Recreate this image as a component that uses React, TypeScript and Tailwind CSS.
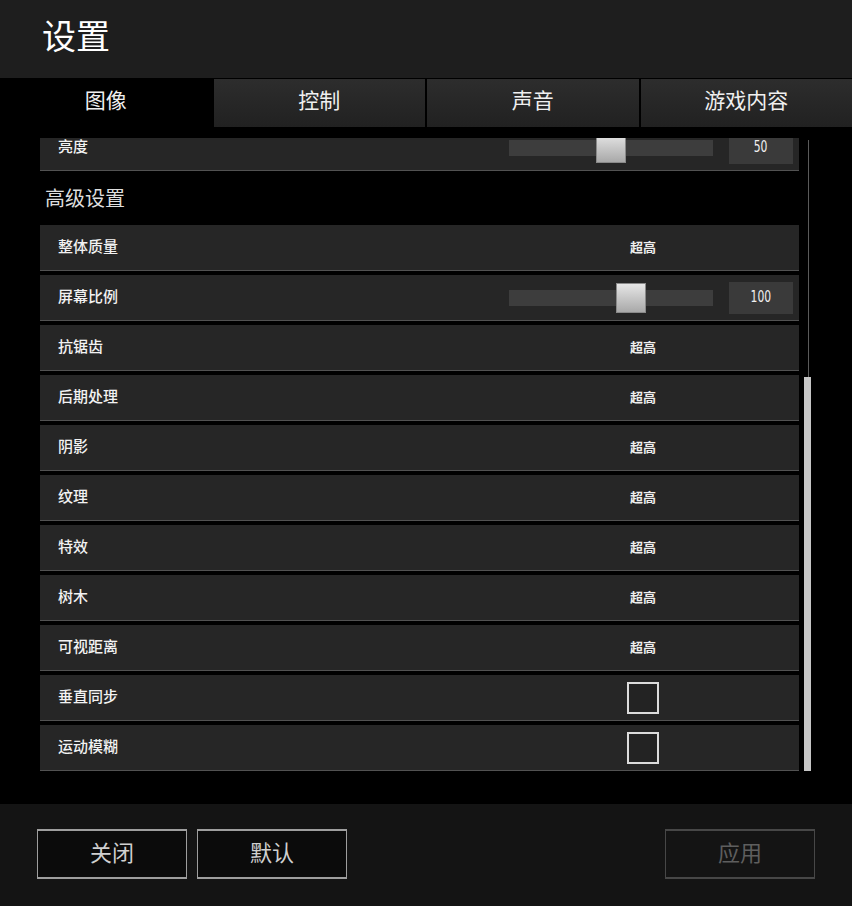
import React from "react";

const FONT = "font-['Noto_Sans_CJK_SC','Noto_Sans',sans-serif]";

type Row =
  | { label: string; kind: "text"; value: string }
  | { label: string; kind: "check" }
  | { label: string; kind: "slider"; value: number; thumb: string };

const rows: Row[] = [
  { label: "整体质量", kind: "text", value: "超高" },
  { label: "屏幕比例", kind: "slider", value: 100, thumb: "left-[107px]" },
  { label: "抗锯齿", kind: "text", value: "超高" },
  { label: "后期处理", kind: "text", value: "超高" },
  { label: "阴影", kind: "text", value: "超高" },
  { label: "纹理", kind: "text", value: "超高" },
  { label: "特效", kind: "text", value: "超高" },
  { label: "树木", kind: "text", value: "超高" },
  { label: "可视距离", kind: "text", value: "超高" },
  { label: "垂直同步", kind: "check" },
  { label: "运动模糊", kind: "check" },
];

const tabs = ["图像", "控制", "声音", "游戏内容"];

function Slider({ value, thumb }: { value: number; thumb: string }) {
  return (
    <div className="flex items-center gap-4">
      <div className="relative h-4 w-[204px] bg-[#3d3d3d]">
        <div
          className={`absolute top-1/2 h-[30px] w-[30px] -translate-y-1/2 border border-[#8a8a8a] bg-gradient-to-b from-[#e6e6e6] to-[#a9a9a9] ${thumb}`}
        />
      </div>
      <div className="flex h-8 w-16 items-center justify-center bg-[#3a3a3a] text-[#f0f0f0]">
        <span className="inline-block scale-x-[0.8] font-['DejaVu_Sans_Condensed','Liberation_Sans',sans-serif] text-[15px]">
          {value}
        </span>
      </div>
    </div>
  );
}

function SettingRow({ row, className = "" }: { row: Row; className?: string }) {
  return (
    <div
      className={`flex h-[46px] shrink-0 items-center border-b border-[#525252] bg-[#262626] ${className}`}
    >
      <div className="w-[469px] pb-[3px] pl-[18px] text-[15px] font-medium text-[#f2f2f2]">
        {row.label}
      </div>
      {row.kind === "text" && (
        <div className="w-[268px] pb-px text-center text-[13px] font-bold text-[#eeeeee]">
          {row.value}
        </div>
      )}
      {row.kind === "check" && (
        <div className="flex w-[268px] justify-center">
          <div className="h-8 w-8 border-2 border-[#dcdcdc] bg-[#232323]" />
        </div>
      )}
      {row.kind === "slider" && <Slider value={row.value} thumb={row.thumb} />}
    </div>
  );
}

export default function App() {
  return (
    <div className={`flex h-[906px] w-[852px] flex-col bg-black ${FONT}`}>
      <div className="flex h-[78px] shrink-0 items-center bg-[#1e1e1e] pb-2 pl-[42px]">
        <h1 className="text-[34px] leading-none text-white">设置</h1>
      </div>

      <div className="grid h-[49px] shrink-0 grid-cols-4 gap-[2px] pt-px">
        {tabs.map((t, i) => (
          <div
            key={t}
            className={`flex items-center justify-center pb-[6px] text-[21px] text-[#f0f0f0] ${
              i === 0 ? "bg-black" : "bg-gradient-to-b from-[#2d2d2d] to-[#212121]"
            }`}
          >
            {t}
          </div>
        ))}
      </div>

      <div className="flex h-[677px] shrink-0 pt-[11px]">
        <div className="flex h-[633px] w-[799px] flex-col gap-1 overflow-hidden pl-10">
          <SettingRow
            className="-mt-[13px]"
            row={{ label: "亮度", kind: "slider", value: 50, thumb: "left-[87px]" }}
          />
          <div className="flex h-[46px] shrink-0 items-center pl-[5px] text-[20px] text-[#dedede]">
            高级设置
          </div>
          {rows.map((r) => (
            <SettingRow key={r.label} row={r} />
          ))}
        </div>
        <div className="ml-[5px] flex h-[633px] w-[7px] flex-col items-center pt-[2px]">
          <div className="ml-[2px] h-[237px] w-px bg-[#5a5a5a]" />
          <div className="w-[7px] flex-1 bg-[#c6c6c6]" />
        </div>
      </div>

      <div className="flex flex-1 items-start bg-[#141414] px-[37px] pt-[25px]">
        <div className="flex gap-[10px]">
          {["关闭", "默认"].map((b) => (
            <button
              key={b}
              className="flex h-[50px] w-[150px] items-center justify-center border border-y-2 border-[#9e9e9e] bg-[#0b0b0b] pb-[5px] text-[22px] text-[#d0d0d0]"
            >
              {b}
            </button>
          ))}
        </div>
        <button className="ml-auto flex h-[50px] w-[150px] items-center justify-center border border-y-2 border-[#474747] bg-[#141414] pb-[5px] text-[22px] text-[#5e5e5e]">
          应用
        </button>
      </div>
    </div>
  );
}
